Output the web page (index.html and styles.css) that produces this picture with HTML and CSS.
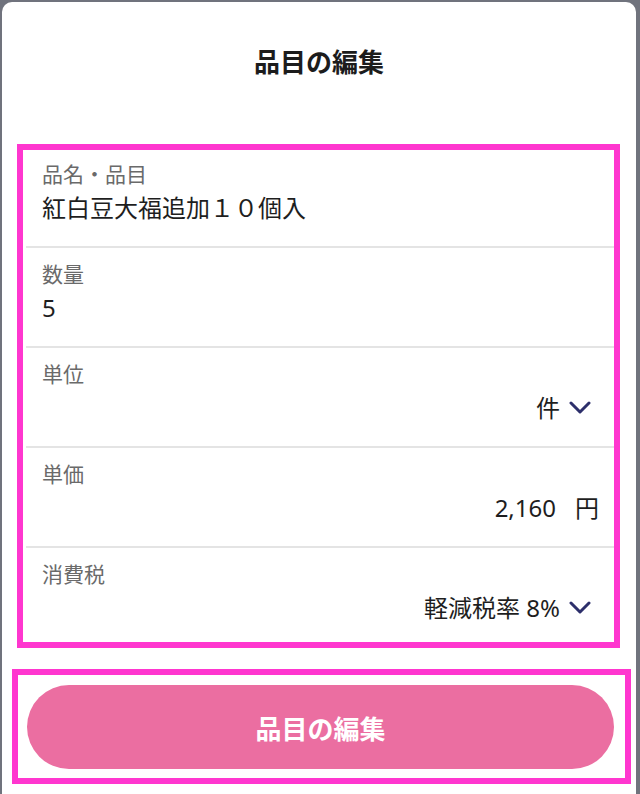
FILE: index.html
```html
<!DOCTYPE html>
<html lang="ja">
<head>
  <meta charset="UTF-8" />
  <meta name="viewport" content="width=device-width, initial-scale=1.0"/>
  <title>品目の編集</title>
  <link rel="stylesheet" href="styles.css">
</head>
<body>

  <div class="panel">
    <h1 class="title">品目の編集</h1>

    <div class="fields mark">
      <div class="field">
        <div class="label">品名・品目</div>
        <div class="value">紅白豆大福追加１０個入</div>
      </div>

      <div class="field">
        <div class="label">数量</div>
        <div class="value">5</div>
      </div>

      <div class="field">
        <div class="label">単位</div>
        <div class="value right">
          件
          <svg class="chevron" width="24" height="14" viewBox="0 0 24 14"><path d="M3 2 L12 11 L21 2" /></svg>
        </div>
      </div>

      <div class="field">
        <div class="label">単価</div>
        <div class="value right">2,160<span class="unit">円</span></div>
      </div>

      <div class="field">
        <div class="label">消費税</div>
        <div class="value right">
          軽減税率 8%
          <svg class="chevron" width="24" height="14" viewBox="0 0 24 14"><path d="M3 2 L12 11 L21 2" /></svg>
        </div>
      </div>
    </div>

    <div class="actions mark">
      <button class="submit">品目の編集</button>
    </div>
  </div>

</body>
</html>
```

FILE: styles.css
```css
* {
  margin: 0;
  padding: 0;
  box-sizing: border-box;
}

body {
  font-family: 'Noto Sans', 'Noto Sans CJK JP', sans-serif;
  background: #70737d;
  color: #222;
  height: 794px;
  overflow: hidden;
}

.panel {
  background: #fff;
  margin: 2px 4px 0 2px;
  border-radius: 10px 10px 0 0;
  height: 792px;
}

.title {
  text-align: center;
  font-size: 26px;
  font-weight: bold;
  line-height: 40px;
  padding: 40px 0 62px;
  color: #1c1c1c;
}

/* pink annotation frames */
.mark {
  border: 6px solid #ff36cf;
}

.fields {
  margin: 0 16px 0 15px;
}

.field {
  margin-left: 3px;
  padding: 12px 15px 18px 16px;
  border-bottom: 2px solid #e4e4e4;
}

.field:first-child {
  padding-top: 10px;
}

.field:last-child {
  border-bottom: none;
  padding-bottom: 14px;
}

.label {
  font-size: 21px;
  line-height: 28px;
  color: #6a6a6a;
}

.value {
  font-size: 24px;
  line-height: 40px;
  color: #1e1e1e;
}

.value.right {
  display: flex;
  justify-content: flex-end;
  align-items: center;
}

.unit {
  margin-left: 19px;
}

.chevron {
  margin-left: 8px;
  margin-right: 7px;
  fill: none;
  stroke: #2d2f6b;
  stroke-width: 3;
  stroke-linecap: round;
  stroke-linejoin: round;
}

.actions {
  margin: 21px 5px 0 10px;
  padding: 10px 11px 9px 9px;
}

.submit {
  display: block;
  width: 100%;
  height: 84px;
  border: none;
  border-radius: 42px;
  background: #eb6ea1;
  color: #fff;
  font-family: 'Noto Sans CJK JP', sans-serif;
  font-size: 26px;
  font-weight: bold;
  cursor: pointer;
}
```
